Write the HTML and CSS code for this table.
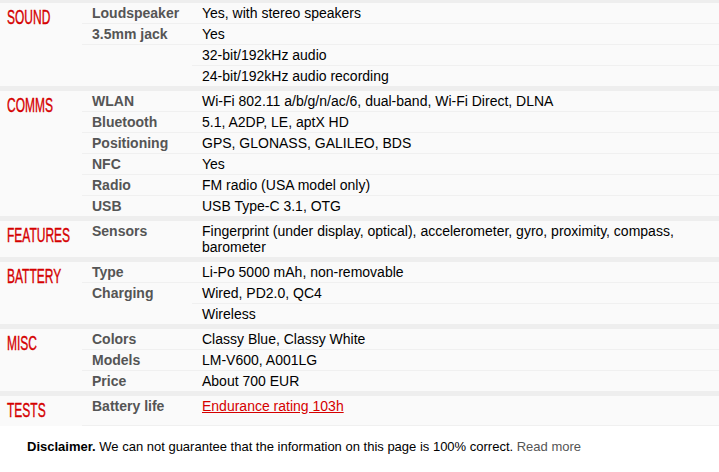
FILE: index.html
```html
<!DOCTYPE html>
<html>
<head>
<meta charset="utf-8">
<link rel="stylesheet" href="styles.css">
</head>
<body>
<div class="specs">
<table class="sec first">
<colgroup><col class="c1"><col class="c2"><col class="c3"></colgroup>
<tr><th rowspan="4"><span class="hd">SOUND</span></th><td class="ttl">Loudspeaker</td><td class="nfo">Yes, with stereo speakers</td></tr>
<tr><td class="ttl">3.5mm jack</td><td class="nfo">Yes</td></tr>
<tr><td class="ttl nob"></td><td class="nfo">32-bit/192kHz audio</td></tr>
<tr class="last"><td class="ttl"></td><td class="nfo">24-bit/192kHz audio recording</td></tr>
</table>
<table class="sec">
<colgroup><col class="c1"><col class="c2"><col class="c3"></colgroup>
<tr><th rowspan="6"><span class="hd">COMMS</span></th><td class="ttl">WLAN</td><td class="nfo">Wi-Fi 802.11 a/b/g/n/ac/6, dual-band, Wi-Fi Direct, DLNA</td></tr>
<tr><td class="ttl">Bluetooth</td><td class="nfo">5.1, A2DP, LE, aptX HD</td></tr>
<tr><td class="ttl">Positioning</td><td class="nfo">GPS, GLONASS, GALILEO, BDS</td></tr>
<tr><td class="ttl">NFC</td><td class="nfo">Yes</td></tr>
<tr><td class="ttl">Radio</td><td class="nfo">FM radio (USA model only)</td></tr>
<tr class="last"><td class="ttl">USB</td><td class="nfo">USB Type-C 3.1, OTG</td></tr>
</table>
<table class="sec">
<colgroup><col class="c1"><col class="c2"><col class="c3"></colgroup>
<tr class="last"><th><span class="hd">FEATURES</span></th><td class="ttl">Sensors</td><td class="nfo">Fingerprint (under display, optical), accelerometer, gyro, proximity, compass, barometer</td></tr>
</table>
<table class="sec">
<colgroup><col class="c1"><col class="c2"><col class="c3"></colgroup>
<tr><th rowspan="3"><span class="hd">BATTERY</span></th><td class="ttl">Type</td><td class="nfo">Li-Po 5000 mAh, non-removable</td></tr>
<tr><td class="ttl nob">Charging</td><td class="nfo">Wired, PD2.0, QC4</td></tr>
<tr class="last"><td class="ttl"></td><td class="nfo">Wireless</td></tr>
</table>
<table class="sec">
<colgroup><col class="c1"><col class="c2"><col class="c3"></colgroup>
<tr><th rowspan="3"><span class="hd">MISC</span></th><td class="ttl">Colors</td><td class="nfo">Classy Blue, Classy White</td></tr>
<tr><td class="ttl">Models</td><td class="nfo">LM-V600, A001LG</td></tr>
<tr class="last"><td class="ttl">Price</td><td class="nfo">About 700 EUR</td></tr>
</table>
<table class="sec tests">
<colgroup><col class="c1"><col class="c2"><col class="c3"></colgroup>
<tr><th><span class="hd">TESTS</span></th><td class="ttl">Battery life</td><td class="nfo"><a class="lnk" href="#">Endurance rating 103h</a></td></tr>
</table>
</div>
<p class="disclaimer"><b>Disclaimer.</b> We can not guarantee that the information on this page is 100% correct. <a class="more" href="#">Read more</a></p>
</body>
</html>
```
FILE: styles.css
```css
html, body {
  margin: 0;
  padding: 0;
  background: #fff;
  font-family: "Liberation Sans", Arial, sans-serif;
  font-size: 14px;
  color: #000;
}
.specs {
  width: 719px;
}
.sec {
  width: 100%;
  table-layout: fixed;
  border-collapse: separate;
  border-spacing: 0;
  border-top: 5px solid #eeeeee;
  background: #fafafa;
}
.sec.first {
  border-top-width: 3px;
}
.c1 { width: 82px; }
.c2 { width: 110px; }
th {
  text-align: left;
  vertical-align: top;
  padding: 1px 0 0 7px;
  line-height: 27px;
  font-weight: normal;
  overflow: hidden;
  white-space: nowrap;
}
.hd {
  display: inline-block;
  font-family: "Liberation Sans", Arial, sans-serif;
  font-size: 20px;
  color: #d50000;
  transform: scaleX(0.6);
  transform-origin: left center;
  -webkit-text-stroke: 0.4px #d50000;
}
td {
  vertical-align: top;
  padding: 2px 10px;
  line-height: 16px;
  height: 16px;
  border-bottom: 1px solid #f0f0f0;
}
td.ttl {
  font-weight: bold;
  color: #555;
  white-space: nowrap;
}
td.nfo {
  color: #000;
}
td.nob {
  border-bottom-color: transparent;
}
tr.last td {
  border-bottom: none;
}
.tests td {
  border-bottom: 1px solid #f0f0f0;
}
.lnk {
  color: #d50000;
  text-decoration: underline;
}
.disclaimer {
  margin: 0;
  padding: 11px 27px 16px;
  line-height: 20px;
  font-size: 13px;
  color: #000;
  border-bottom: 1px solid #c0c0c0;
}
.more {
  color: #555;
  text-decoration: none;
}
```
